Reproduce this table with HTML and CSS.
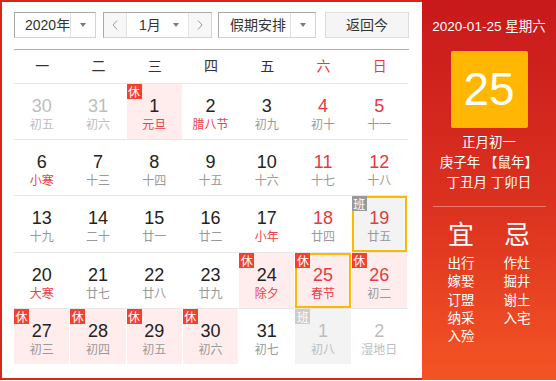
FILE: index.html
```html
<!DOCTYPE html>
<html lang="zh-CN">
<head>
<meta charset="utf-8">
<title>万年历</title>
<link rel="stylesheet" href="styles.css">
</head>
<body>
<div class="cal">
  <div class="main">
    <div class="toolbar">
      <div class="select year"><span class="label">2020年</span><span class="arrow"><i class="tri"></i></span></div>
      <div class="select month">
        <span class="nav prev"><svg width="6" height="10" viewBox="0 0 6 10"><path d="M5 0.5 L1 5 L5 9.5" fill="none" stroke="#9a9a9a" stroke-width="1"/></svg></span>
        <span class="mlabel"><span>1月</span><i class="tri"></i></span>
        <span class="nav next"><svg width="6" height="10" viewBox="0 0 6 10"><path d="M1 0.5 L5 5 L1 9.5" fill="none" stroke="#9a9a9a" stroke-width="1"/></svg></span>
      </div>
      <div class="select holiday"><span class="label">假期安排</span><span class="arrow"><i class="tri"></i></span></div>
      <div class="btn">返回今</div>
    </div>
    <div class="rule"></div>
    <div class="weekdays">
      <span>一</span><span>二</span><span>三</span><span>四</span><span>五</span><span class="red">六</span><span class="red">日</span>
    </div>
    <div class="grid">
      <div class="cell other"><div class="num">30</div><div class="lunar">初五</div></div>
      <div class="cell other"><div class="num">31</div><div class="lunar">初六</div></div>
      <div class="cell off"><span class="badge">休</span><div class="num">1</div><div class="lunar fest">元旦</div></div>
      <div class="cell"><div class="num">2</div><div class="lunar fest">腊八节</div></div>
      <div class="cell"><div class="num">3</div><div class="lunar">初九</div></div>
      <div class="cell wk"><div class="num">4</div><div class="lunar">初十</div></div>
      <div class="cell wk"><div class="num">5</div><div class="lunar">十一</div></div>

      <div class="cell"><div class="num">6</div><div class="lunar fest">小寒</div></div>
      <div class="cell"><div class="num">7</div><div class="lunar">十三</div></div>
      <div class="cell"><div class="num">8</div><div class="lunar">十四</div></div>
      <div class="cell"><div class="num">9</div><div class="lunar">十五</div></div>
      <div class="cell"><div class="num">10</div><div class="lunar">十六</div></div>
      <div class="cell wk"><div class="num">11</div><div class="lunar">十七</div></div>
      <div class="cell wk"><div class="num">12</div><div class="lunar">十八</div></div>

      <div class="cell"><div class="num">13</div><div class="lunar">十九</div></div>
      <div class="cell"><div class="num">14</div><div class="lunar">二十</div></div>
      <div class="cell"><div class="num">15</div><div class="lunar">廿一</div></div>
      <div class="cell"><div class="num">16</div><div class="lunar">廿二</div></div>
      <div class="cell"><div class="num">17</div><div class="lunar fest">小年</div></div>
      <div class="cell wk"><div class="num">18</div><div class="lunar">廿四</div></div>
      <div class="cell wk work hl"><span class="badge ban">班</span><div class="num">19</div><div class="lunar">廿五</div></div>

      <div class="cell"><div class="num">20</div><div class="lunar fest">大寒</div></div>
      <div class="cell"><div class="num">21</div><div class="lunar">廿七</div></div>
      <div class="cell"><div class="num">22</div><div class="lunar">廿八</div></div>
      <div class="cell"><div class="num">23</div><div class="lunar">廿九</div></div>
      <div class="cell off"><span class="badge">休</span><div class="num">24</div><div class="lunar fest">除夕</div></div>
      <div class="cell off wk hl"><span class="badge">休</span><div class="num">25</div><div class="lunar fest">春节</div></div>
      <div class="cell off wk"><span class="badge">休</span><div class="num">26</div><div class="lunar">初二</div></div>

      <div class="cell off last"><span class="badge">休</span><div class="num">27</div><div class="lunar">初三</div></div>
      <div class="cell off last"><span class="badge">休</span><div class="num">28</div><div class="lunar">初四</div></div>
      <div class="cell off last"><span class="badge">休</span><div class="num">29</div><div class="lunar">初五</div></div>
      <div class="cell off last"><span class="badge">休</span><div class="num">30</div><div class="lunar">初六</div></div>
      <div class="cell last"><div class="num">31</div><div class="lunar">初七</div></div>
      <div class="cell other work last"><span class="badge ban light">班</span><div class="num">1</div><div class="lunar">初八</div></div>
      <div class="cell other last"><div class="num">2</div><div class="lunar">湿地日</div></div>
    </div>
  </div>
  <div class="side">
    <div class="date">2020-01-25 星期六</div>
    <div class="bigday">25</div>
    <div class="info">
      <div>正月初一</div>
      <div>庚子年 【鼠年】</div>
      <div>丁丑月 丁卯日</div>
    </div>
    <div class="sep"></div>
    <div class="yiji">
      <div class="col">
        <div class="head">宜</div>
        <ul><li>出行</li><li>嫁娶</li><li>订盟</li><li>纳采</li><li>入殓</li></ul>
      </div>
      <div class="col">
        <div class="head">忌</div>
        <ul><li>作灶</li><li>掘井</li><li>谢土</li><li>入宅</li></ul>
      </div>
    </div>
  </div>
</div>
</body>
</html>
```

FILE: styles.css
```css
body {
  margin: 0;
  background: #fff;
  font-family: "Liberation Sans", "Noto Sans CJK SC", sans-serif;
}

.cal {
  display: flex;
  width: 556px;
  height: 380px;
}

.main {
  box-sizing: border-box;
  width: 422px;
  height: 380px;
  border: 2px solid #d9251d;
  border-right: 0;
  padding: 10px 13px 0 12px;
}

.toolbar {
  display: flex;
  height: 26px;
}

.select {
  box-sizing: border-box;
  height: 26px;
  display: flex;
  border: 1px solid #d4d4d4;
  border-top-color: #a9a9a9;
  border-left-color: #a9a9a9;
  background: #fff;
  font-size: 14px;
  color: #333;
}

.select .label {
  flex: 1;
  line-height: 24px;
  white-space: nowrap;
}

.select .arrow {
  width: 24px;
  border-left: 1px solid #e3e3e3;
  display: flex;
  align-items: center;
  justify-content: center;
}

.tri {
  display: block;
  width: 0;
  height: 0;
  border-left: 3.5px solid transparent;
  border-right: 3.5px solid transparent;
  border-top: 4px solid #7a7a7a;
}

.year {
  width: 82px;
  margin-right: 7px;
}

.year .label {
  padding-left: 10px;
}

.month {
  width: 109px;
  margin-right: 6px;
}

.month .nav {
  width: 22px;
  background: #f7f7f7;
  display: flex;
  align-items: center;
  justify-content: center;
}

.month .prev {
  border-right: 1px solid #e3e3e3;
}

.month .next {
  border-left: 1px solid #e3e3e3;
}

.month .mlabel {
  flex: 1;
  display: flex;
  align-items: center;
  justify-content: space-between;
  padding: 0 9px 0 12px;
  line-height: 24px;
}

.holiday {
  width: 98px;
  margin-right: 9px;
}

.holiday .label {
  padding-left: 11px;
}

.btn {
  box-sizing: border-box;
  width: 84px;
  height: 26px;
  border: 1px solid #dcdcdc;
  background: #f5f5f5;
  font-size: 14px;
  line-height: 24px;
  color: #333;
  text-align: center;
}

.rule {
  height: 1px;
  margin-top: 11px;
  background: #f29090;
}

.weekdays {
  display: grid;
  grid-template-columns: repeat(7, 1fr);
  width: 394px;
  height: 33px;
  line-height: 33px;
  border-bottom: 1px solid #e6e6e6;
  text-align: center;
  font-size: 14px;
  color: #333;
}

.weekdays .red {
  color: #e8393e;
}

.grid {
  display: grid;
  grid-template-columns: repeat(7, 1fr);
  grid-template-rows: repeat(5, 56.2px);
  width: 394px;
}

.cell {
  position: relative;
  box-sizing: border-box;
  border-right: 1px solid transparent;
  border-bottom: 1px solid #e6e6e6;
  background-clip: padding-box;
  text-align: center;
  padding-top: 12px;
}

.cell.last {
  border-bottom-color: transparent;
}

.num {
  font-size: 18px;
  line-height: 20px;
  color: #222;
}

.lunar {
  font-size: 12px;
  line-height: 18px;
  color: #999;
}

.wk .num {
  color: #e8393e;
}

.lunar.fest {
  color: #eb4248;
}

.off {
  background-color: #ffeded;
}

.work {
  background-color: #f3f3f3;
}

.other .num,
.other .lunar {
  color: #bdbdbd;
}

.hl {
  box-shadow: inset 0 0 0 2px #fcb900;
}

.badge {
  position: absolute;
  left: 0;
  top: 0;
  width: 15px;
  height: 15px;
  font-size: 12px;
  line-height: 15px;
  color: #fff;
  background: #f6402f;
  font-family: "Noto Sans CJK SC", sans-serif;
}

.badge.ban {
  background: #999;
}

.badge.ban.light {
  background: #cdcdcd;
}

.side {
  width: 134px;
  height: 380px;
  background: linear-gradient(180deg, #c8191b 0%, #dc3220 55%, #f45424 100%);
  color: #fff;
  text-align: center;
  display: flex;
  flex-direction: column;
  align-items: center;
}

.date {
  margin-top: 17px;
  font-size: 13.5px;
  line-height: 20px;
  white-space: nowrap;
}

.bigday {
  margin-top: 14px;
  width: 77px;
  height: 77px;
  background: #ffb703;
  border-radius: 2px;
  font-size: 46px;
  line-height: 77px;
}

.info {
  margin-top: 5px;
  font-size: 13.5px;
  line-height: 20px;
  white-space: nowrap;
}

.sep {
  margin-top: 13px;
  width: 113px;
  height: 1px;
  background: rgba(255, 255, 255, 0.35);
}

.yiji {
  display: flex;
  margin-top: 13px;
}

.col {
  width: 56px;
}

.col .head {
  font-size: 26px;
  line-height: 30px;
}

.col ul {
  list-style: none;
  margin: 5px 0 0;
  padding: 0;
  font-size: 13.5px;
  line-height: 18.3px;
}
```
